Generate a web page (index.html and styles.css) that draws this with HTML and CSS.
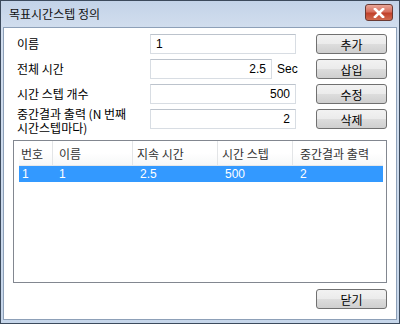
FILE: index.html
```html
<html>
  <head>
    <meta charset="utf-8">
    <link rel="stylesheet" href="styles.css">
  </head>
  <body>
    <div class="window">
      <div class="titlebar">
        <span class="title">목표시간스텝 정의</span>
        <span class="close">
          <svg width="14" height="10" viewBox="0 0 14 10">
            <path d="M3 1 L11 9 M11 1 L3 9" stroke="#fff" stroke-width="2.6" stroke-linecap="square"/>
          </svg>
        </span>
      </div>
      <div class="client">
        <div class="form">
          <div class="label">이름</div>
          <div class="field"><input class="text" type="text" value="1"></div>
          <button class="btn">추가</button>

          <div class="label">전체 시간</div>
          <div class="field"><input class="text num short" type="text" value="2.5"><span class="unit">Sec</span></div>
          <button class="btn">삽입</button>

          <div class="label">시간 스텝 개수</div>
          <div class="field"><input class="text num" type="text" value="500"></div>
          <button class="btn">수정</button>

          <div class="label two">중간결과 출력 (N 번째<br>시간스텝마다)</div>
          <div class="field"><input class="text num" type="text" value="2"></div>
          <button class="btn">삭제</button>
        </div>

        <div class="list">
          <div class="row head">
            <div class="c1">번호</div>
            <div class="c2">이름</div>
            <div class="c3">지속 시간</div>
            <div class="c4">시간 스텝</div>
            <div class="c5">중간결과 출력</div>
          </div>
          <div class="row sel">
            <div class="c1">1</div>
            <div class="c2">1</div>
            <div class="c3">2.5</div>
            <div class="c4">500</div>
            <div class="c5">2</div>
          </div>
        </div>

        <div class="footer">
          <button class="btn">닫기</button>
        </div>
      </div>
    </div>
  </body>
</html>
```

FILE: styles.css
```css
* {
    box-sizing: border-box;
}
body {
    margin: 0;
    font-family: "Noto Sans CJK KR", "Liberation Sans", sans-serif;
    font-size: 12px;
    color: #000;
}
.window {
    width: 400px;
    height: 324px;
    border: 1px solid #3c4a5c;
    background: linear-gradient(#c3d3e8, #d2deee 28px, #c6d6ea);
    display: flex;
    flex-direction: column;
    padding: 0 2px 3px 2px;
}
.titlebar {
    height: 26px;
    display: flex;
    align-items: center;
    justify-content: space-between;
    padding: 0 4px 2px 6px;
}
.title {
    font-size: 12px;
    color: #111;
}
.close {
    width: 28px;
    height: 17px;
    border: 1px solid #6b3a33;
    border-radius: 3px;
    background: linear-gradient(#e8a597, #d7705f 45%, #c1412b 55%, #d06a4f);
    display: flex;
    align-items: center;
    justify-content: center;
    margin-top: -1px;
}
.client {
    flex: 1;
    background: #fff;
    border: 1px solid #8da0b8;
    padding: 6px 9px 0 9px;
    display: flex;
    flex-direction: column;
}
.form {
    display: grid;
    grid-template-columns: 113px 146px 71px;
    grid-auto-rows: 20px;
    column-gap: 20px;
    row-gap: 5px;
    padding-left: 4px;
    align-items: center;
}
.label {
    font-size: 12px;
    line-height: 14px;
    white-space: nowrap;
}
.label.two {
    line-height: 14px;
    margin-top: 3px;
}
.field {
    display: flex;
    align-items: center;
    height: 20px;
}
.text {
    width: 146px;
    height: 20px;
    border: 1px solid #d8dde3;
    border-top-color: #bcc3cc;
    font-family: "Liberation Sans", sans-serif;
    font-size: 12px;
    padding: 0 5px;
    outline: none;
}
.text.num {
    text-align: right;
}
.text.short {
    width: 122px;
}
.unit {
    font-family: "Liberation Sans", sans-serif;
    margin-left: 5px;
}
.btn {
    width: 71px;
    height: 20px;
    border: 1px solid #707070;
    border-radius: 3px;
    background: linear-gradient(#f2f2f2, #ebebeb 50%, #dddddd 51%, #cfcfcf);
    font-family: "Noto Sans CJK KR", sans-serif;
    font-size: 12px;
    padding: 0;
    color: #000;
}
.list {
    margin-top: 11px;
    height: 143px;
    border: 1px solid #828790;
    padding: 0 3px 0 5px;
}
.row {
    display: flex;
    align-items: center;
}
.row div {
    padding-left: 4px;
    white-space: nowrap;
}
.c1 { width: 34px; }
.c2 { width: 80px; }
.c3 { width: 85px; }
.c4 { width: 75px; }
.c5 { flex: 1; }
.head {
    height: 25px;
    background: linear-gradient(#fff, #fff 50%, #f6f7f8);
    border-bottom: 1px solid #e6e8ea;
}
.head div {
    color: #333;
    border-right: 1px solid #e3e5e7;
    height: 100%;
    display: flex;
    align-items: center;
}
.head .c1 { padding-left: 2px; }
.head .c2 { padding-left: 6px; }
.head .c5 { border-right: none; padding-left: 7px; }
.sel {
    height: 16px;
    background: #3399ff;
    color: #fff;
    font-family: "Liberation Sans", sans-serif;
}
.sel .c1 { padding-left: 3px; }
.sel .c2 { padding-left: 6px; }
.sel .c3 { padding-left: 7px; }
.sel .c4 { padding-left: 7px; }
.sel .c5 { padding-left: 7px; }
.footer {
    display: flex;
    justify-content: flex-end;
    padding: 6px 0 0 0;
}
```
